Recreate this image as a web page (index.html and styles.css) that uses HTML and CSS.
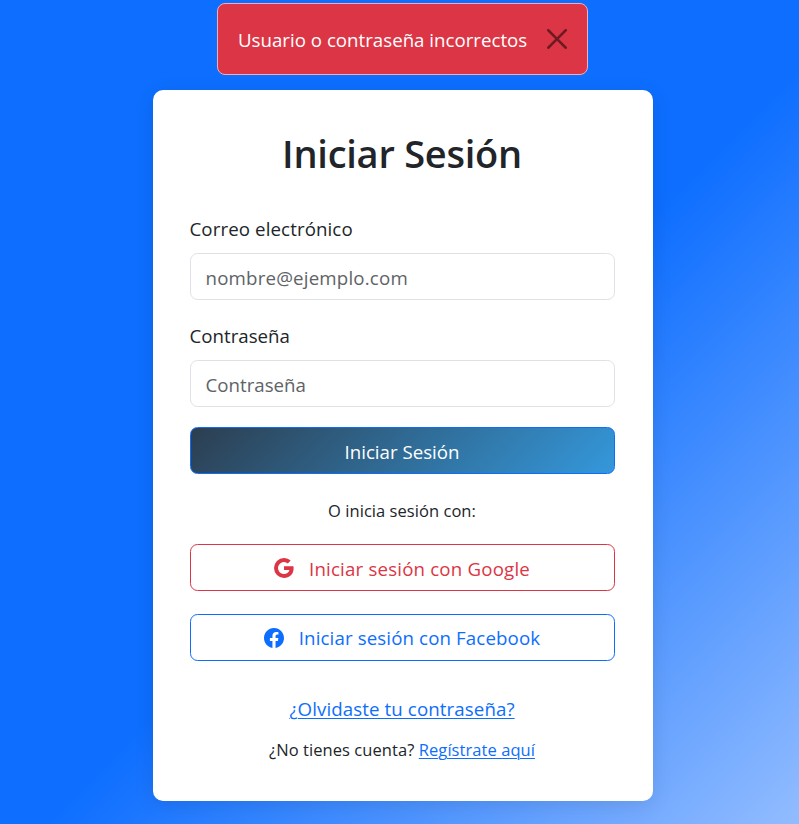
FILE: index.html
```html
<!DOCTYPE html>
<html lang="es">
<head>
<meta charset="utf-8">
<title>Iniciar Sesión</title>
<link rel="stylesheet" href="styles.css">
</head>
<body>
<div class="alert" role="alert">
  <span class="alert-text">Usuario o contraseña incorrectos</span>
  <button class="close" type="button" aria-label="Cerrar">
    <svg viewBox="0 0 16 16"><path d="M.293.293a1 1 0 0 1 1.414 0L8 6.586 14.293.293a1 1 0 1 1 1.414 1.414L9.414 8l6.293 6.293a1 1 0 0 1-1.414 1.414L8 9.414l-6.293 6.293a1 1 0 0 1-1.414-1.414L6.586 8 .293 1.707a1 1 0 0 1 0-1.414z"/></svg>
  </button>
</div>
<main class="card">
  <h1>Iniciar Sesión</h1>
  <form>
    <label for="email">Correo electrónico</label>
    <input class="i-email" id="email" type="email" placeholder="nombre@ejemplo.com">
    <label for="password" class="l-pass">Contraseña</label>
    <input id="password" type="password" placeholder="Contraseña">
    <button class="btn primary" type="button">Iniciar Sesión</button>
  </form>
  <p class="divider">O inicia sesión con:</p>
  <button class="btn google" type="button">
    <svg viewBox="0 0 16 16"><path d="M15.545 6.558a9.42 9.42 0 0 1 .139 1.626c0 2.434-.87 4.492-2.384 5.885h.002C11.978 15.292 10.158 16 8 16A8 8 0 1 1 8 0a7.689 7.689 0 0 1 5.352 2.082l-2.284 2.284A4.347 4.347 0 0 0 8 3.166c-2.087 0-3.86 1.408-4.492 3.304a4.792 4.792 0 0 0 0 3.063h.003c.635 1.893 2.405 3.301 4.492 3.301 1.078 0 2.004-.276 2.722-.764h-.003a3.702 3.702 0 0 0 1.599-2.431H8v-3.08h7.545z"/></svg>
    <span>Iniciar sesión con Google</span>
  </button>
  <button class="btn facebook" type="button">
    <svg viewBox="0 0 16 16"><path d="M16 8.049c0-4.446-3.582-8.05-8-8.05C3.58 0-.002 3.603-.002 8.05c0 4.017 2.926 7.347 6.75 7.951v-5.625h-2.03V8.05H6.75V6.275c0-2.017 1.195-3.131 3.022-3.131.876 0 1.791.157 1.791.157v1.98h-1.009c-.993 0-1.303.621-1.303 1.258v1.51h2.218l-.354 2.326H9.25V16c3.824-.604 6.75-3.934 6.75-7.951z"/></svg>
    <span>Iniciar sesión con Facebook</span>
  </button>
  <p class="forgot"><a href="#">¿Olvidaste tu contraseña?</a></p>
  <p class="register">¿No tienes cuenta? <a href="#">Regístrate aquí</a></p>
</main>
</body>
</html>
```

FILE: styles.css
```css
* { box-sizing: border-box; }

html { height: 100%; }

body {
  margin: 0;
  height: 824px;
  padding: 3px 0 0 6px;
  overflow: hidden;
  display: flex;
  flex-direction: column;
  align-items: center;
  gap: 15px;
  font-family: "Segoe UI", "Open Sans", "Noto Sans", sans-serif;
  font-size: 18.7px;
  line-height: 30px;
  color: #212529;
  background: linear-gradient(135deg, #0d6eff 0, #0d6eff 612px, #92bcff 1148px);
}

.alert {
  flex: none;
  width: 371px;
  height: 72px;
  display: flex;
  align-items: center;
  justify-content: space-between;
  padding: 0 20px;
  border: 1px solid #f1aeb5;
  border-radius: 8px;
  background: #dc3545;
  color: #fff;
  white-space: nowrap;
}

.alert-text { padding-top: 2px; }

.close {
  display: flex;
  padding: 0;
  border: 0;
  background: none;
  opacity: .5;
}

.close svg { width: 20px; height: 20px; }

.card {
  flex: none;
  width: 500px;
  height: 711px;
  padding: 37px 38px 37px 37px;
  border-radius: 10px;
  background: #fff;
  box-shadow: 0 4px 20px rgba(0, 0, 0, .1);
}

h1 {
  margin: 2px 0 36px;
  font-size: 38px;
  font-weight: 600;
  line-height: 48px;
  letter-spacing: -.25px;
  text-align: center;
}

form { display: flex; flex-direction: column; }

label {
  height: 30px;
  margin-bottom: 10px;
  line-height: 32px;
  letter-spacing: .1px;
}

.l-pass { letter-spacing: 0; }

input {
  width: 100%;
  height: 47px;
  margin: 0 0 20px;
  padding: 2px 15px 0;
  border: 1px solid #dee2e6;
  border-radius: 7.5px;
  font: inherit;
  color: inherit;
  background: #fff;
}

.i-email { letter-spacing: .18px; }

input::placeholder { color: #5e6367; opacity: 1; }

.btn {
  width: 100%;
  height: 47px;
  display: flex;
  align-items: center;
  justify-content: center;
  padding: 2px 0 0;
  border: 1px solid;
  border-radius: 7.5px;
  font: inherit;
  background: #fff;
  white-space: nowrap;
}

.btn svg { width: 20px; height: 20px; margin: -2px 15px 0 0; }

svg { display: block; fill: currentColor; }

.primary {
  border-color: #0d6efd;
  color: #fff;
  background: linear-gradient(135deg, #2c3e50, #3498db);
}

.google { color: #dc3545; margin-bottom: 23px; letter-spacing: .18px; }

.facebook { color: #0d6efd; padding-top: 0; letter-spacing: .12px; }

.facebook svg { margin-top: 0; }

p { margin: 0; text-align: center; white-space: nowrap; }

.divider { margin: 22px 0 18px; font-size: 16.5px; letter-spacing: .05px; }

.forgot { margin-top: 33px; letter-spacing: .1px; }

.register { margin-top: 11px; font-size: 16.5px; letter-spacing: .07px; }

a {
  color: #0d6efd;
  text-decoration: underline;
  text-underline-offset: 2px;
  text-decoration-thickness: 1px;
}
```
